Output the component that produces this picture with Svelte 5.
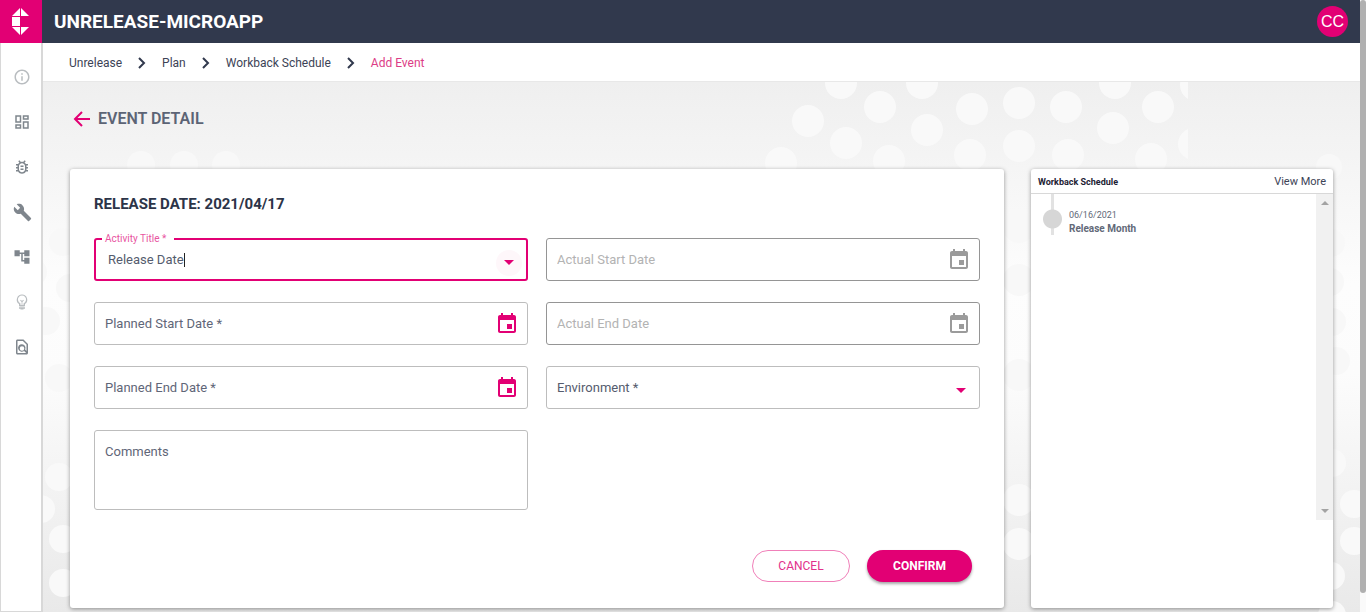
<script>
  const crumbs = ['Unrelease', 'Plan', 'Workback Schedule'];
  const nav = [
    { label: 'Information', light: true, d: 'M11 7h2v2h-2zm0 4h2v6h-2zm1-9C6.480 2 2 6.480 2 12s4.480 10 10 10 10-4.480 10-10S17.520 2 12 2zm0 18c-4.410 0-8-3.590-8-8s3.590-8 8-8 8 3.590 8 8-3.590 8-8 8z' },
    { label: 'Dashboard', d: 'M19 5v2h-4V5h4M9 5v6H5V5h4m10 8v6h-4v-6h4M9 17v2H5v-2h4M21 3h-8v6h8V3zM11 3H3v10h8V3zm10 8h-8v10h8V11zm-10 4H3v6h8v-6z' },
    { label: 'Issues', d: 'M20 8h-2.810c-.45-.78-1.070-1.450-1.820-1.960L17 4.410 15.590 3l-2.170 2.170C12.960 5.060 12.490 5 12 5s-.96.06-1.410.17L8.410 3 7 4.410l1.620 1.630C7.880 6.550 7.260 7.220 6.810 8H4v2h2.090c-.05.33-.09.66-.09 1v1H4v2h2v1c0 .34.04.67.09 1H4v2h2.810c1.040 1.790 2.970 3 5.190 3s4.150-1.210 5.190-3H20v-2h-2.090c.05-.33.09-.66.09-1v-1h2v-2h-2v-1c0-.34-.04-.67-.09-1H20V8zm-4 7c0 2.210-1.790 4-4 4s-4-1.790-4-4v-4c0-2.210 1.790-4 4-4s4 1.790 4 4v4zm-6-1h4v2h-4zm0-4h4v2h-4z' },
    { label: 'Tools', wide: true, d: 'M22.700 19l-9.100-9.100c.9-2.300.4-5-1.500-6.900-2-2-5-2.400-7.400-1.300L9 6 6 9 1.600 4.700C.4 7.100.9 10.100 2.900 12.100c1.900 1.900 4.600 2.400 6.900 1.500l9.100 9.100c.4.4 1 .4 1.400 0l2.300-2.300c.5-.4.5-1.100.1-1.400z' },
    { label: 'Tree', d: 'M22 11V3h-7v3H9V3H2v8h7V8h2v10h4v3h7v-8h-7v3h-2V8h2v3z' },
    { label: 'Ideas', light: true, d: 'M12 2a7 7 0 0 0-4 12.740V17c0 .55.45 1 1 1h6c.55 0 1-.45 1-1v-2.260A7 7 0 0 0 12 2zm2.500 11.500-.5.350V16h-1.500v-4l2-2-1-1-1.500 1.500L10.500 9l-1 1 2 2v4H10v-2.150l-.5-.35A5.400 5.400 0 1 1 14.500 13.500zM8 19h8v2h-2v1h-4v-1H8z' },
    { label: 'Search documents', d: 'M20 19.590V8l-6-6H6c-1.100 0-2 .9-2 2v16c0 1.100.89 2 2 2h12c1.100 0 2-.9 2-2zM6 4h7.170L18 8.830v8.340l-1.770-1.770A5 5 0 1 0 14.800 17.200L17.600 20H6V4zm6 13a3 3 0 1 1 0-6 3 3 0 0 1 0 6z' }
  ];
  const dots = [
    [798, 1], [879, 1], [1072, 1], [1153, 3], [837, 25], [929, 27], [976, 21], [1023, 25], [1115, 25],
    [765, 39], [884, 48], [1070, 46], [803, 61], [976, 64], [927, 73], [1025, 73], [846, 79], [738, 81],
    [1108, 77], [1151, 62]
  ];
  let title = $state('Release Date');
</script>

{#snippet calendar()}
  <svg class="cal" viewBox="0 0 24 24" aria-hidden="true"><path d="M17 12h-5v5h5v-5zM16 1v2H8V1H6v2H5c-1.110 0-1.990.9-1.990 2L3 19c0 1.100.89 2 2 2h14c1.100 0 2-.9 2-2V5c0-1.100-.9-2-2-2h-1V1h-2zm3 18H5V8h14v11z" /></svg>
{/snippet}

<div class="app">
  <header>
    <a class="logo" href="#home" aria-label="Home">
      <svg viewBox="0 0 42 43" aria-hidden="true"><path d="M20 8v8h-8zM21 8l8 8h-8zM12 17h8v9h-8zM12 27h8v8zM21 27h8l-8 8z" /></svg>
    </a>
    <h1>UNRELEASE-MICROAPP</h1>
    <button class="avatar">CC</button>
  </header>
  <div class="body">
    <nav class="side" aria-label="Main">
      {#each nav as n}
        <a href="#nav" aria-label={n.label} class:light={n.light}>
          <svg viewBox="0 0 24 24" class:wide={n.wide} aria-hidden="true"><path fill-rule="evenodd" d={n.d} /></svg>
        </a>
      {/each}
    </nav>
    <div class="content">
      <nav class="crumbs" aria-label="Breadcrumb">
        {#each crumbs as c}
          <a href="#crumb">{c}</a>
          <svg viewBox="0 0 8 12" aria-hidden="true"><path d="M1 1l5 5-5 5" /></svg>
        {/each}
        <span>Add Event</span>
      </nav>
      <main>
        <svg class="dots" aria-hidden="true">
          <svg width="1145" height="100%">
            {#each dots as [x, y]}<circle cx={x} cy={y} r="16" />{/each}
          </svg>
          <g class="faint">
            <circle cx="98" cy="83" r="14" /><circle cx="141" cy="83" r="14" /><circle cx="183" cy="83" r="14" />
            <circle cx="20" cy="160" r="14" /><circle cx="-10" cy="190" r="14" /><circle cx="27" cy="206" r="14" /><circle cx="3" cy="239" r="14" /><circle cx="16" cy="296" r="14" />
            <circle cx="976" cy="145" r="16" /><circle cx="976" cy="198" r="16" /><circle cx="976" cy="293" r="16" />
            <circle cx="1286" cy="85" r="13" /><circle cx="1288" cy="161" r="14" /><circle cx="1287" cy="200" r="14" /><circle cx="1289" cy="240" r="14" /><circle cx="1293" cy="279" r="14" />
          </g>
          <circle cx="16" cy="395" r="14" /><circle cx="-2" cy="427" r="14" /><circle cx="20" cy="457" r="14" /><circle cx="20" cy="501" r="14" />
          <circle cx="976" cy="418" r="16" /><circle cx="976" cy="462" r="16" />
          <circle cx="1289" cy="381" r="14" /><circle cx="1311" cy="422" r="14" /><circle cx="1311" cy="459" r="14" /><circle cx="1288" cy="494" r="14" /><circle cx="1289" cy="533" r="14" />
        </svg>
        <div class="heading">
          <button aria-label="Back"><svg viewBox="0 0 18 18" aria-hidden="true"><path d="M17 9H2M9 2L2 9l7 7" /></svg></button>
          <h2>EVENT DETAIL</h2>
        </div>
        <div class="cols">
          <form class="card form">
            <h3>RELEASE DATE: 2021/04/17</h3>
            <div class="grid">
              <div class="field focus">
                <label for="title">Activity Title *</label>
                <div class="entry"><input id="title" bind:value={title} /><i class="caret"></i></div>
                <button type="button" class="open" aria-label="Open activity titles"><i class="tri"></i></button>
              </div>
              <div class="field off">
                <input aria-label="Actual Start Date" placeholder="Actual Start Date" disabled />{@render calendar()}
              </div>
              <div class="field">
                <input aria-label="Planned Start Date" placeholder="Planned Start Date *" />{@render calendar()}
              </div>
              <div class="field off">
                <input aria-label="Actual End Date" placeholder="Actual End Date" disabled />{@render calendar()}
              </div>
              <div class="field">
                <input aria-label="Planned End Date" placeholder="Planned End Date *" />{@render calendar()}
              </div>
              <div class="field pick">
                <select aria-label="Environment"><option>Environment *</option></select><i class="tri"></i>
              </div>
              <textarea aria-label="Comments" placeholder="Comments"></textarea>
            </div>
            <div class="actions">
              <button type="button" class="cancel">CANCEL</button>
              <button type="button" class="confirm">CONFIRM</button>
            </div>
          </form>
          <aside class="card">
            <div class="top"><h4>Workback Schedule</h4><a href="#more">View More</a></div>
            <div class="list">
              <div class="event">
                <i class="mark"></i>
                <div><time>06/16/2021</time><b>Release Month</b></div>
              </div>
              <div class="bar"><i class="up"></i><i class="down"></i></div>
            </div>
          </aside>
        </div>
      </main>
    </div>
  </div>
  <div class="scroll"></div>
</div>

<style>
  :global(body) { margin: 0; }
  .app { --pink: #e20074; --navy: #31394d; position: relative; min-height: 100vh; display: flex; flex-direction: column; padding-right: 6px; box-sizing: border-box; overflow: hidden; font: 12px/16px Roboto, "Open Sans", sans-serif; color: #3c4356; background: #fafafa; }
  .app * { box-sizing: border-box; }
  a { color: inherit; text-decoration: none; }
  button { border: 0; padding: 0; background: none; font: inherit; color: inherit; cursor: pointer; }
  h1, h2, h3, h4 { margin: 0; }
  header { display: flex; align-items: center; height: 43px; background: var(--navy); color: #fff; padding-right: 12px; }
  .logo { width: 42px; height: 43px; background: var(--pink); fill: #fff; }
  .logo svg { display: block; width: 42px; height: 43px; }
  h1 { font-size: 19px; line-height: 24px; margin-left: 12px; }
  .avatar { width: 31px; height: 31px; border-radius: 50%; background: var(--pink); margin-left: auto; font: 16px/31px "Liberation Sans", sans-serif; color: #fff; }
  .body { flex: 1; display: flex; }
  .side { width: 43px; flex: none; display: flex; flex-direction: column; align-items: center; gap: 21px; padding: 22px 0 0 2px; background: #fff; border: 1px solid #d8d8d8; border-right-width: 2px; border-top: 0; }
  .side a { width: 24px; height: 24px; display: flex; align-items: center; justify-content: center; fill: #7f868d; }
  .side .light { fill: #b9bdc0; }
  .side svg { width: 18px; height: 18px; }
  .side .wide { width: 19px; height: 19px; }
  .content { flex: 1; min-width: 0; display: flex; flex-direction: column; }
  .crumbs { height: 39px; display: flex; align-items: center; gap: 16px; padding: 2px 0 0 26px; background: #fff; border-bottom: 1px solid #e8e8e8; }
  .crumbs svg { width: 8px; height: 12px; fill: none; stroke: var(--navy); stroke-width: 2; }
  .crumbs span { color: #dc3c86; }
  main { position: relative; flex: 1; padding: 24px 27px 4px; background: linear-gradient(#efefef, #fdfdfd 38%, #fcfcfc 55%, #e9e9e9); }
  .dots { position: absolute; inset: 0; width: 100%; height: 100%; fill: #f9f9f9; overflow: hidden; }
  .faint { fill: #f8f8f8; }
  .heading, .cols { position: relative; }
  .heading { display: flex; align-items: center; gap: 7px; height: 26px; padding-left: 3px; }
  .heading svg { display: block; width: 18px; height: 18px; fill: none; stroke: var(--pink); stroke-width: 2; }
  h2 { font-size: 16px; line-height: 20px; font-weight: 600; color: #5c6475; }
  .cols { display: grid; grid-template-columns: minmax(0, 934fr) minmax(0, 302fr); gap: 27px; margin-top: 37px; }
  .card { background: #fff; border-radius: 3px; box-shadow: 0 1px 4px rgba(0, 0, 0, .4); }
  .form { height: 439px; padding: 25px 24px 0; display: flex; flex-direction: column; }
  h3 { font-size: 15px; line-height: 20px; color: #2c3448; }
  .grid { display: grid; grid-template-columns: 1fr 1fr; gap: 21px 18px; margin-top: 24px; }
  .field { position: relative; display: flex; align-items: center; height: 43px; border: 1px solid #bdbdbd; border-radius: 3px; padding: 0 8px 0 10px; color: var(--pink); }
  input, select, textarea { flex: 1; min-width: 0; width: 100%; border: 0; padding: 0; outline: 0; background: transparent; font: 13px/18px Roboto, sans-serif; color: #555c6e; appearance: none; opacity: 1; }
  ::placeholder { color: #5f6678; opacity: 1; }
  .off { border-color: #959595; color: #9b9b9b; }
  .off ::placeholder { color: #b3b3b3; }
  .cal { width: 24px; height: 24px; fill: currentColor; }
  .tri { border: 5px solid transparent; border-top-color: var(--pink); border-bottom: 0; }
  .pick { padding-right: 13px; }
  .pick .tri { margin-top: 6px; }
  .focus { border: 2px solid var(--pink); padding: 0 4px 0 12px; }
  .focus label { position: absolute; left: 6px; top: -8px; padding: 0 8px 0 3px; background: #fff; font-size: 10px; line-height: 14px; color: #e8559f; }
  .entry { flex: 1; display: flex; align-items: center; }
  .entry input { flex: none; width: auto; field-sizing: content; }
  .caret { width: 1px; height: 14px; background: #222; }
  .open { width: 26px; height: 26px; border-radius: 50%; background: #fef7fa; display: flex; align-items: center; justify-content: center; margin-top: 6px; }
  textarea { display: block; height: 80px; border: 1px solid #bdbdbd; border-radius: 3px; padding: 12px 10px; resize: none; }
  .actions { display: flex; justify-content: flex-end; gap: 17px; margin-top: 40px; padding-right: 8px; }
  .actions button { height: 32px; border-radius: 16px; font-size: 12px; }
  .actions .cancel { width: 98px; border: 1px solid #f080b9; color: #e2318c; }
  .actions .confirm { width: 105px; background: var(--pink); color: #fff; font-weight: 700; box-shadow: 0 2px 3px rgba(0, 0, 0, .35); }
  .top { display: flex; align-items: center; justify-content: space-between; height: 25px; padding: 1px 7px 0; border-bottom: 1px solid #d8d8d8; }
  .top a { font-size: 11px; }
  h4 { font-size: 9px; line-height: 12px; color: #1d2233; }
  .list { display: flex; justify-content: space-between; height: 326px; }
  .event { display: flex; align-items: flex-start; gap: 7px; padding-left: 12px; font-size: 9px; line-height: 14px; color: #626978; }
  .event > div { padding-top: 14px; }
  .event time, .event b { display: block; }
  .event b { font-size: 10px; }
  .mark { width: 19px; height: 41px; background: radial-gradient(circle at 50% 25px, #d6d6d6 9px, transparent 10px), linear-gradient(#e2e2e2, #e2e2e2) center / 3px 100% no-repeat; }
  .bar { width: 17px; background: #f1f1f1; display: flex; flex-direction: column; justify-content: space-between; align-items: center; padding: 7px 0; }
  .up, .down { border: 4px solid transparent; }
  .up { border-bottom-color: #a3a3a3; border-top: 0; }
  .down { border-top-color: #a3a3a3; border-bottom: 0; }
  .scroll { position: absolute; right: 0; top: 0; bottom: 19px; width: 6px; background: #b0b0b0; border-radius: 3px; }
</style>
